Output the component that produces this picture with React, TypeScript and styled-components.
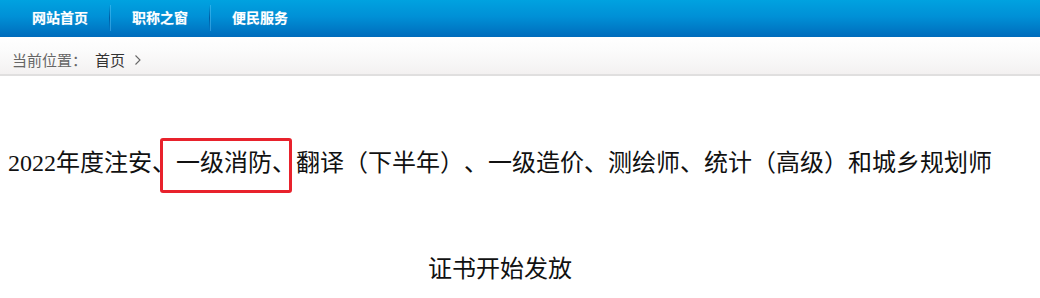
import React from "react";
import styled, { createGlobalStyle } from "styled-components";

const Global = createGlobalStyle`
  html, body { margin: 0; padding: 0; background: #fff; }
  body { font-family: "Liberation Sans", "Noto Sans CJK SC", sans-serif; }
`;

const NavBar = styled.nav`
  height: 37px;
  background: linear-gradient(to bottom, #00a2e0 0%, #0090d6 45%, #006cbc 100%);
  display: flex;
  padding-left: 10px;
`;

const NavItem = styled.a<{ $sep?: boolean }>`
  position: relative;
  width: 100px;
  height: 37px;
  display: flex;
  align-items: center;
  justify-content: center;
  color: #fff;
  font-weight: bold;
  font-size: 14px;
  text-decoration: none;
  padding-bottom: 3px;
  box-sizing: border-box;
  text-shadow: 0 0 1px rgba(255, 255, 255, 0.4);
  &::after {
    content: "";
    display: ${(p) => (p.$sep ? "block" : "none")};
    position: absolute;
    right: 0;
    top: 5px;
    width: 1px;
    height: 26px;
    background: linear-gradient(to bottom, rgba(0, 80, 150, 0), rgba(0, 80, 150, 0.8) 50%, rgba(0, 80, 150, 0));
    box-shadow: 1px 0 0 rgba(120, 210, 255, 0.35);
  }
`;

const Crumbs = styled.div`
  height: 39px;
  box-sizing: border-box;
  background: linear-gradient(to bottom, #ffffff 0%, #fbfbfb 40%, #f3f1f1 100%);
  border-bottom: 2px solid #e0dfdf;
  display: flex;
  align-items: center;
  padding: 8px 0 0 12px;
  font-size: 15px;
  color: #666;
`;

const CrumbLink = styled.span`
  color: #333;
  margin-left: 8px;
`;

const Chevron = styled.svg`
  margin-left: 9px;
  margin-top: 1px;
`;

const Article = styled.div`
  width: 1000px;
  text-align: center;
  font-family: "Liberation Serif", "Noto Sans CJK SC", serif;
  font-size: 24px;
  color: #111;
  text-spacing-trim: space-all;
`;

const Line = styled.p<{ $top: number }>`
  margin: ${(p) => p.$top}px 0 0;
  line-height: 30px;
  white-space: nowrap;
`;

const Marked = styled.span`
  position: relative;
  &::before {
    content: "";
    position: absolute;
    left: -16px;
    right: 4px;
    top: -12px;
    bottom: -17px;
    border: 3px solid #e8222c;
    border-radius: 3px;
    pointer-events: none;
  }
`;

export default function App() {
  return (
    <>
      <Global />
      <NavBar>
        <NavItem $sep>网站首页</NavItem>
        <NavItem $sep>职称之窗</NavItem>
        <NavItem>便民服务</NavItem>
      </NavBar>
      <Crumbs>
        当前位置：
        <CrumbLink>首页</CrumbLink>
        <Chevron width="8" height="12" viewBox="0 0 8 12">
          <path d="M1.5 1.5 L6 6 L1.5 10.5" fill="none" stroke="#666" strokeWidth="1.1" />
        </Chevron>
      </Crumbs>
      <Article>
        <Line $top={72}>
          2022年度注安、<Marked>一级消防、</Marked>翻译（下半年）、一级造价、测绘师、统计（高级）和城乡规划师
        </Line>
        <Line $top={76}>证书开始发放</Line>
      </Article>
    </>
  );
}
